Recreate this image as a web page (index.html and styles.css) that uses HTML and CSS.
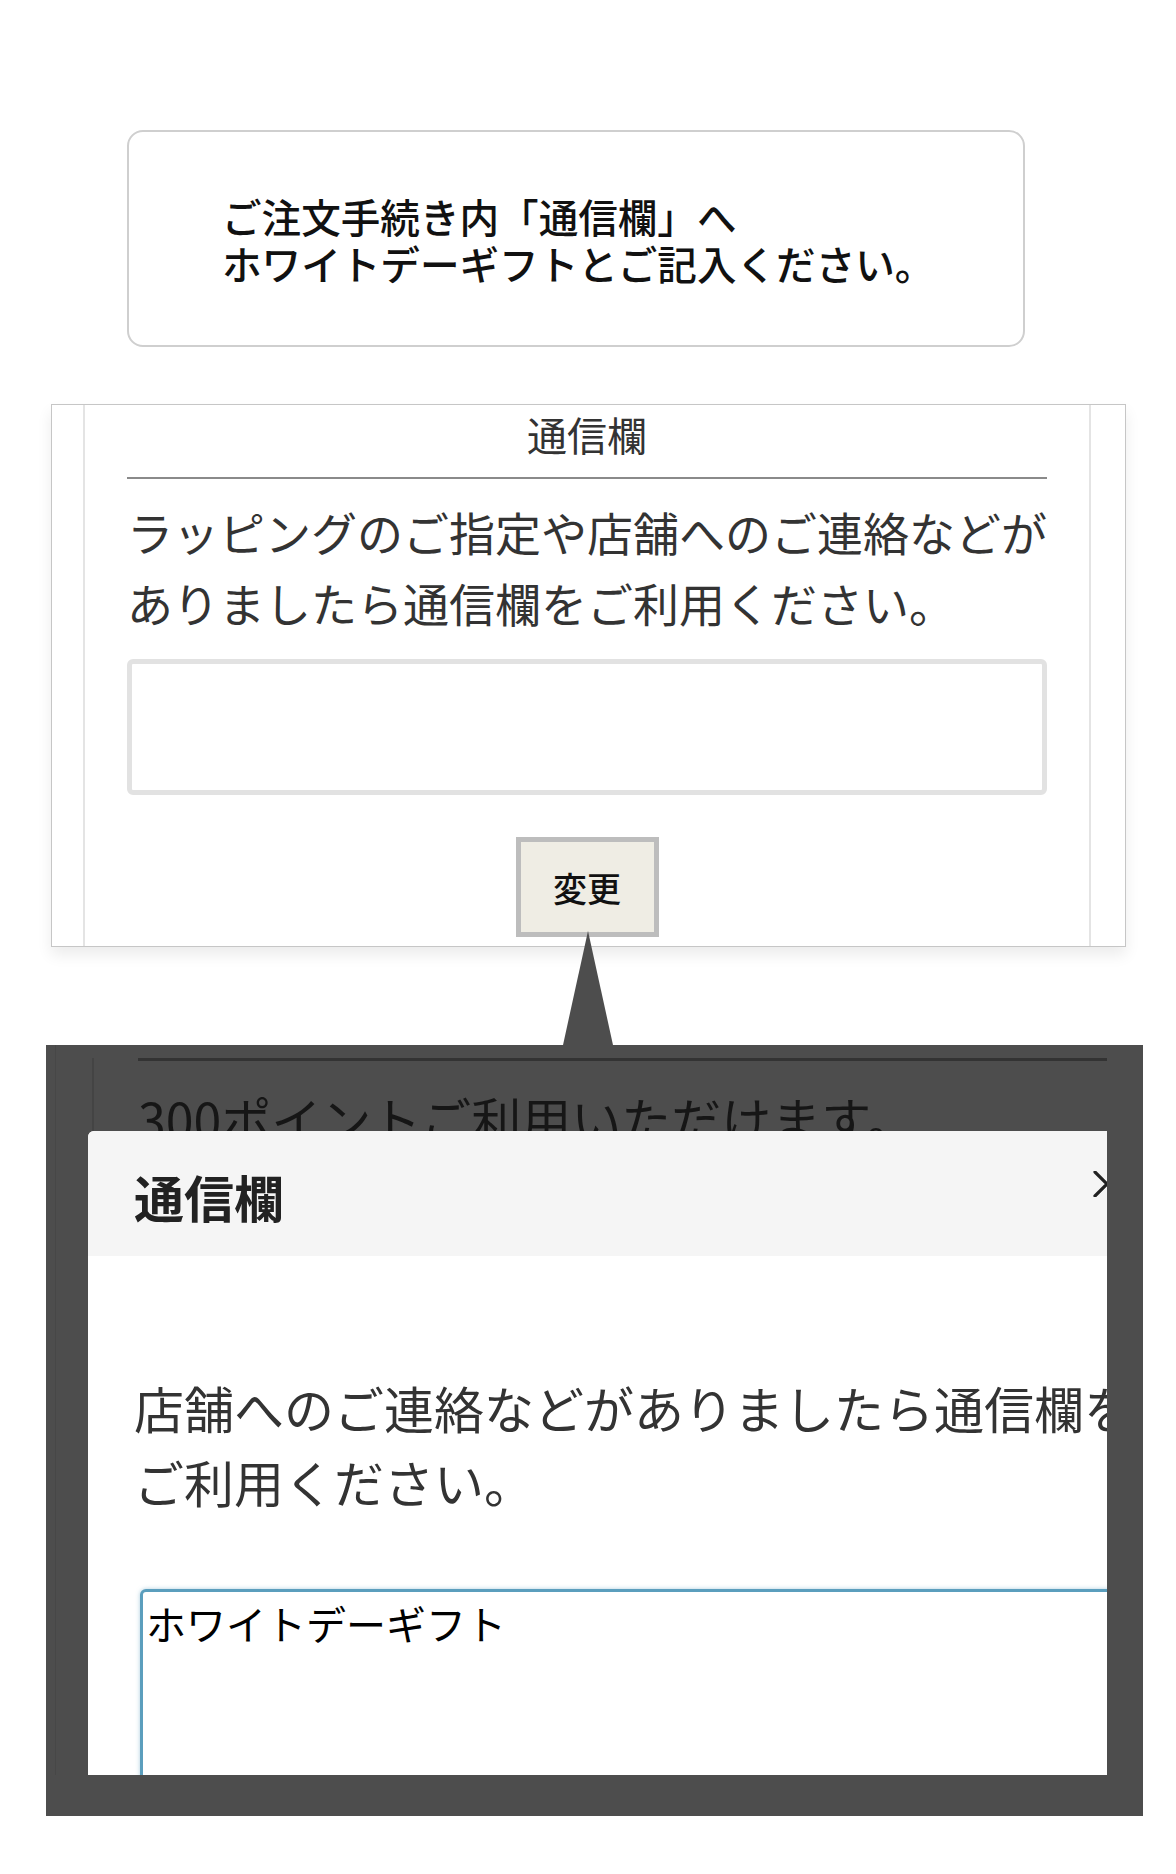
FILE: index.html
```html
<!DOCTYPE html>
<html lang="ja">
<head>
  <meta charset="UTF-8">
  <meta name="viewport" content="width=device-width, initial-scale=1.0">
  <title>通信欄のご案内</title>
  <link rel="stylesheet" href="styles.css">
</head>
<body>
  <div class="note">
    <p>ご注文手続き内「通信欄」へ<br>ホワイトデーギフトとご記入ください。</p>
  </div>

  <section class="panel">
    <div class="frame">
      <h2>通信欄</h2>
      <p>ラッピングのご指定や店舗へのご連絡などが<br>ありましたら通信欄をご利用ください。</p>
      <textarea class="memo" aria-label="通信欄"></textarea>
      <div class="actions">
        <button type="button">変更</button>
      </div>
    </div>
  </section>

  <div class="zoom">
    <div class="shot">
      <div class="dim-page">
        <hr>
        <p>300ポイントご利用いただけます。</p>
      </div>

      <div class="modal">
        <div class="modal-head">
          <h3>通信欄</h3>
          <svg class="close" width="28" height="26" viewBox="0 0 28 26" aria-hidden="true">
            <path d="M2 1 L26 25 M26 1 L2 25" stroke="#222" stroke-width="3.2" stroke-linecap="round"/>
          </svg>
        </div>
        <div class="modal-body">
          <p>店舗へのご連絡などがありましたら通信欄をご利用ください。</p>
          <textarea aria-label="通信欄">ホワイトデーギフト</textarea>
        </div>
      </div>
    </div>
  </div>
</body>
</html>
```

FILE: styles.css
```css
:root {
  font-family: "Noto Sans CJK JP", sans-serif;
}
body {
  margin: 0;
  background: #fff;
  width: 1176px;
}
p, h2, h3 {
  margin: 0;
}

/* top instruction card */
.note {
  box-sizing: border-box;
  width: 898px;
  height: 217px;
  margin: 130px 0 0 127px;
  padding-left: 93px;
  border: 2px solid #cfcfcf;
  border-radius: 16px;
  display: flex;
  align-items: center;
}
.note p {
  font-size: 39.6px;
  line-height: 47px;
  font-weight: 500;
  color: #111;
  white-space: nowrap;
}

/* cart screenshot */
.panel {
  box-sizing: border-box;
  width: 1075px;
  margin: 57px 0 0 51px;
  padding: 0 34px 0 31px;
  border: 1px solid #c6c6c6;
  box-shadow: 0 8px 14px rgba(0, 0, 0, 0.08);
  background: #fff;
}
.frame {
  border-left: 2px solid #e4e4e4;
  border-right: 2px solid #e4e4e4;
  padding: 3px 42px 9px;
  color: #333;
}
.frame h2 {
  font-size: 40px;
  font-weight: 400;
  line-height: 52px;
  text-align: center;
  padding-bottom: 17px;
  border-bottom: 2px solid #8a8a8a;
}
.frame p {
  margin-top: 17px;
  font-size: 46px;
  line-height: 71px;
  white-space: nowrap;
}
.memo {
  display: block;
  box-sizing: border-box;
  width: 100%;
  height: 136px;
  margin-top: 21px;
  border: 5px solid #e2e2e2;
  border-radius: 6px;
  resize: none;
}
.actions {
  display: flex;
  justify-content: center;
  margin-top: 42px;
}
.actions button {
  box-sizing: border-box;
  width: 143px;
  height: 100px;
  border: 5px solid #bdbdbd;
  background: #efede4;
  font-family: inherit;
  font-size: 34px;
  font-weight: 500;
  color: #111;
  padding: 0;
}

/* magnified modal */
.zoom {
  position: relative;
  box-sizing: border-box;
  width: 1097px;
  height: 771px;
  margin: 98px 0 0 46px;
  padding: 0 36px 41px 9px;
  background: #4d4d4d;
}
.zoom::before {
  content: "";
  position: absolute;
  bottom: 100%;
  left: 517px;
  width: 50px;
  height: 114px;
  background: #4d4d4d;
  clip-path: polygon(50% 0, 100% 100%, 0 100%);
}
.shot {
  position: relative;
  height: 100%;
  overflow: hidden;
  border-left: 1px solid #474747;
}
.dim-page {
  margin-left: 36px;
  padding-left: 44px;
  height: 100%;
  border-left: 2px solid #444;
}
.dim-page hr {
  margin: 13px 0 0;
  border: 0;
  height: 3px;
  background: #333;
}
.dim-page p {
  margin-top: 20px;
  font-size: 50px;
  line-height: 74px;
  color: #161616;
  white-space: nowrap;
}
.modal {
  position: absolute;
  top: 86px;
  left: 32px;
  width: 1100px;
  height: 700px;
  background: #fff;
  border-radius: 6px 6px 0 0;
  overflow: hidden;
}
.modal-head {
  height: 125px;
  box-sizing: border-box;
  padding: 0 67px 0 46px;
  background: #f5f5f5;
  display: flex;
  align-items: center;
  justify-content: space-between;
}
.modal-head h3 {
  font-size: 50px;
  line-height: 50px;
  font-weight: 700;
  color: #222;
  padding-top: 5px;
}
.close {
  align-self: flex-start;
  margin-top: 40px;
}
.modal-body {
  padding: 114px 46px 0;
}
.modal-body p {
  font-size: 50px;
  line-height: 74px;
  color: #333;
}
.modal-body textarea {
  display: block;
  box-sizing: border-box;
  width: 1000px;
  height: 300px;
  margin: 71px 0 0 6px;
  padding: 5px 3px;
  border: 3px solid #5b9ebd;
  border-radius: 6px;
  box-shadow: 0 0 4px rgba(91, 158, 189, 0.5);
  font-family: inherit;
  font-size: 40px;
  line-height: 52px;
  color: #000;
  resize: none;
}
```
